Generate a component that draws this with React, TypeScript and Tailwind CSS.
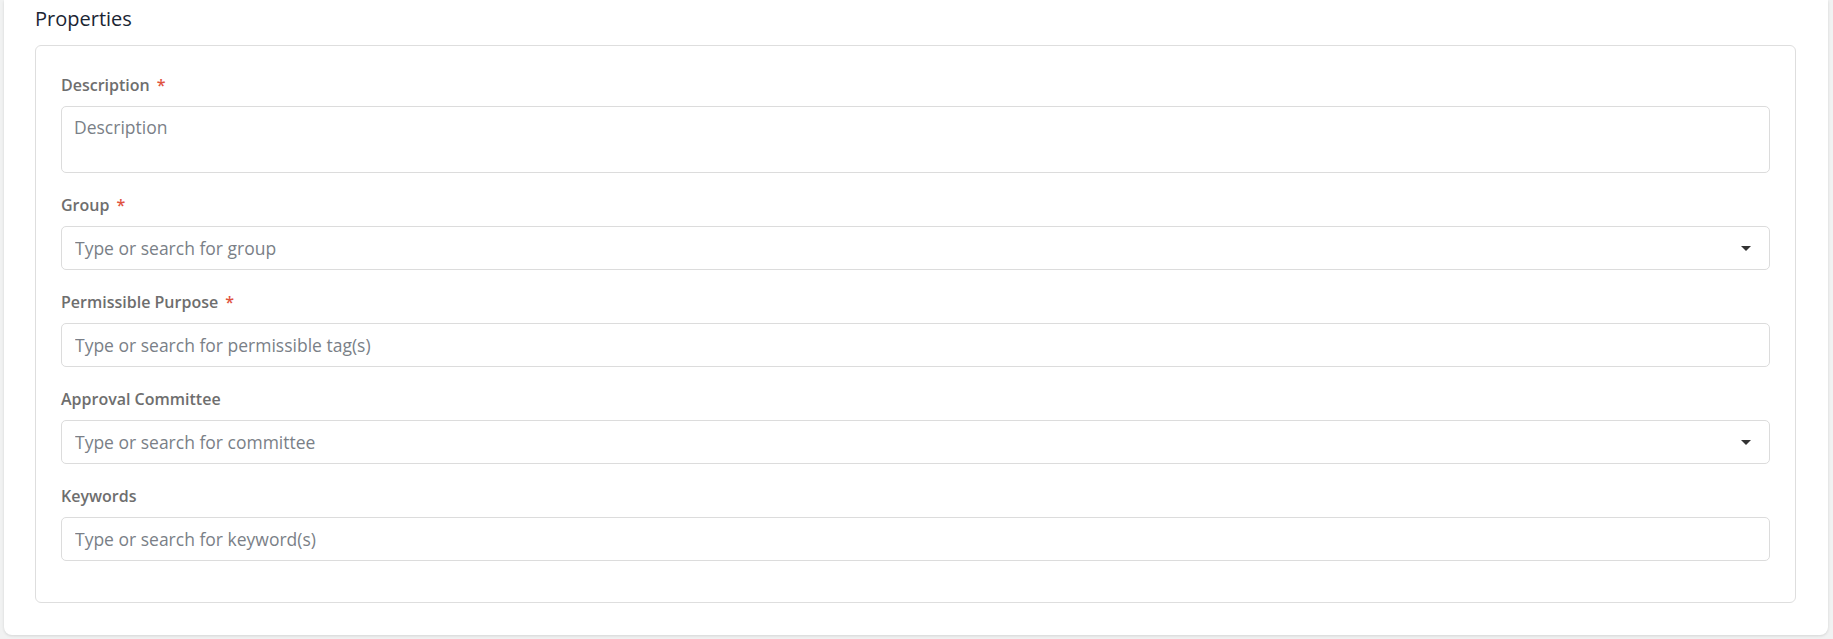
import { ReactNode } from 'react';

type Field = {
  label: string;
  placeholder: string;
  required?: boolean;
  select?: boolean;
  multiline?: boolean;
};

const fields: Field[] = [
  { label: 'Description', placeholder: 'Description', required: true, multiline: true },
  { label: 'Group', placeholder: 'Type or search for group', required: true, select: true },
  { label: 'Permissible Purpose', placeholder: 'Type or search for permissible tag(s)', required: true },
  { label: 'Approval Committee', placeholder: 'Type or search for committee', select: true },
  { label: 'Keywords', placeholder: 'Type or search for keyword(s)' },
];

function Caret() {
  return (
    <svg width="10" height="5" viewBox="0 0 10 5" className="shrink-0">
      <path d="M0 0 L10 0 L5 5 Z" fill="#333333" />
    </svg>
  );
}

function Label({ children, required }: { children: ReactNode; required?: boolean }) {
  return (
    <label className="block pt-px mb-[11px] text-[16px] leading-5 font-semibold text-[#6e6e6e]">
      {children}
      {required && <span className="ml-[7px] text-[#e0533f]">*</span>}
    </label>
  );
}

export default function App() {
  return (
    <div className="w-full h-[639px] bg-[#f1f2f2] pl-1 pr-[5px] font-['Open_Sans',sans-serif]">
      {/* Card */}
      <div className="h-[635px] bg-white rounded-b-lg shadow-[0_1px_3px_rgba(0,0,0,0.12)] pl-[31px] pr-[32px] pt-[5px]">
        <h2 className="text-xl leading-7 font-medium text-[#1a2533] mb-3">Properties</h2>

        {/* Fieldset box */}
        <div className="h-[558px] border border-[#dedede] rounded-md pl-[25px] pr-[25px] pt-[28px]">
          {fields.map((f) => (
            <div key={f.label} className="mb-[21px]">
              <Label required={f.required}>{f.label}</Label>
              {f.multiline ? (
                <textarea
                  readOnly
                  placeholder={f.placeholder}
                  className="block w-full h-[67px] resize-none border border-[#dcdcdc] rounded-[5px] pl-[12px] pr-3 pt-[8px] text-[17.5px] leading-6 text-[#333] placeholder:text-[#7a7f87] outline-none"
                />
              ) : (
                <div className="flex items-center h-[44px] border border-[#dcdcdc] rounded-[5px] pl-[13px] pr-[18px]">
                  <input
                    readOnly
                    placeholder={f.placeholder}
                    className="flex-1 min-w-0 bg-transparent text-[17.5px] leading-6 text-[#333] placeholder:text-[#7a7f87] outline-none"
                  />
                  {f.select && <Caret />}
                </div>
              )}
            </div>
          ))}
        </div>
      </div>
    </div>
  );
}
